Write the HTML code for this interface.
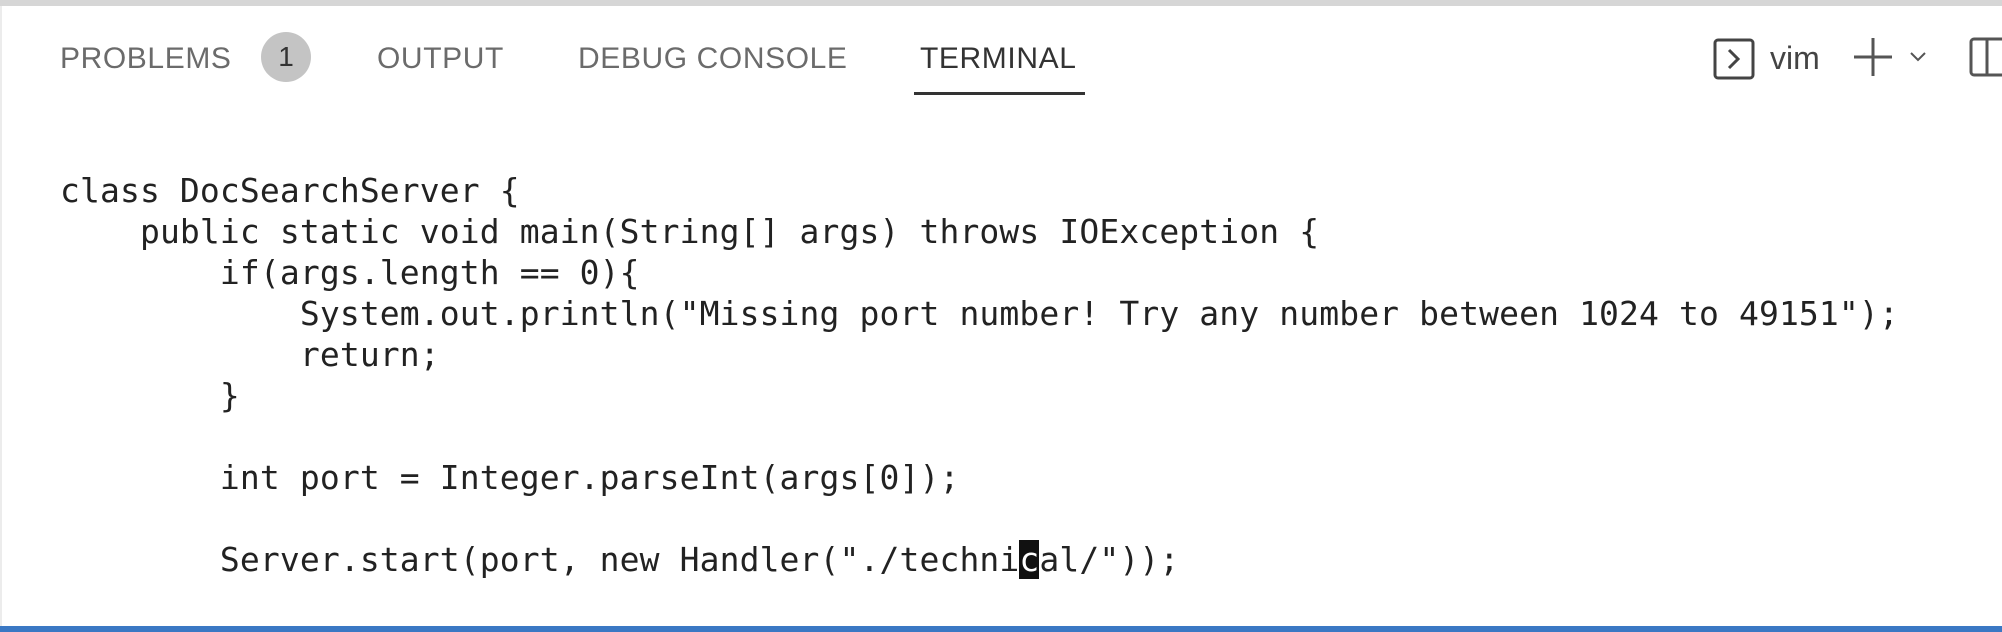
<!DOCTYPE html>
<html><head><style>
body{margin:0;width:2002px;height:632px;background:#fff;position:relative;overflow:hidden;font-family:"Liberation Sans",sans-serif}
.top{position:absolute;left:0;top:0;width:2002px;height:6px;background:#d6d6d6}
.left{position:absolute;left:0;top:6px;width:2px;height:620px;background:#ececec}
.bot{position:absolute;left:0;top:626px;width:2002px;height:6px;background:#3a78c4}
.tab{position:absolute;top:41px;font-size:30px;color:#6b6b6b;line-height:36px;letter-spacing:0.6px}
.badge{position:absolute;left:261px;top:32px;width:50px;height:50px;border-radius:50%;background:#c4c4c4;color:#333;font-size:28px;text-align:center;line-height:50px}
.ul{position:absolute;left:914px;top:92px;width:171px;height:3px;background:#333}
pre{position:absolute;left:60px;top:170px;margin:0;font-family:"DejaVu Sans Mono","Liberation Mono",monospace;font-size:33px;line-height:41px;color:#222;letter-spacing:0.12px}
.cur{background:#111;color:#fff}
</style></head><body>
<div class="top"></div><div class="left"></div>
<div class="tab" style="left:60px">PROBLEMS</div>
<div class="badge">1</div>
<div class="tab" style="left:377px">OUTPUT</div>
<div class="tab" style="left:578px">DEBUG CONSOLE</div>
<div class="tab" style="left:920px;color:#333">TERMINAL</div>
<div class="ul"></div>
<svg style="position:absolute;left:1712px;top:36px" width="46" height="46" viewBox="0 0 46 46"><rect x="3" y="4" width="38" height="38" rx="3" fill="none" stroke="#444" stroke-width="3"/><path d="M17 14l9 9-9 9" fill="none" stroke="#444" stroke-width="3"/></svg>
<div class="tab" style="left:1770px;top:40px;color:#444;font-size:32px;letter-spacing:0">vim</div>
<svg style="position:absolute;left:1852px;top:36px" width="82" height="42" viewBox="0 0 82 42"><path d="M2 21h38M21 2v38" stroke="#555" stroke-width="3"/><path d="M59 17l7 7 7-7" fill="none" stroke="#555" stroke-width="2"/></svg>
<svg style="position:absolute;left:1968px;top:36px" width="34" height="42" viewBox="0 0 34 42"><rect x="3" y="3" width="40" height="36" rx="3" fill="none" stroke="#555" stroke-width="3"/><path d="M19 3v36" stroke="#555" stroke-width="3"/></svg>
<pre>class DocSearchServer {
    public static void main(String[] args) throws IOException {
        if(args.length == 0){
            System.out.println("Missing port number! Try any number between 1024 to 49151");
            return;
        }

        int port = Integer.parseInt(args[0]);

        Server.start(port, new Handler("./techni<span class="cur">c</span>al/"));</pre>
<div class="bot"></div>
</body></html>
